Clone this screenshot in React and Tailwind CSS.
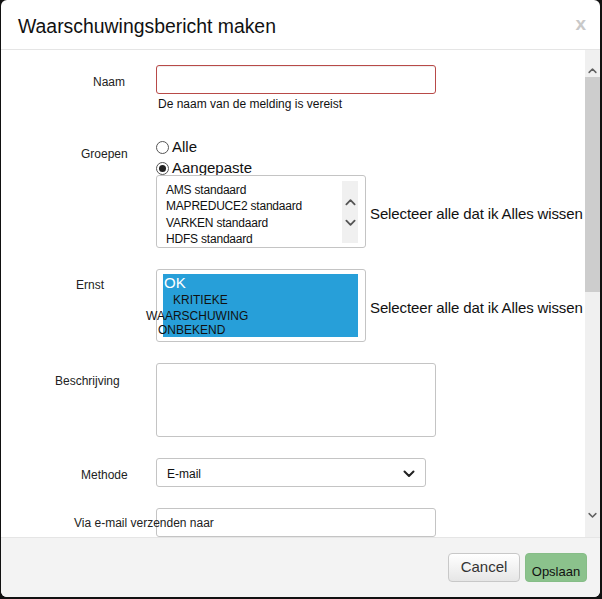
import React from "react";

const font = "font-['Liberation_Sans',Arial,sans-serif]";

function Chevron({ dir = "down", className = "" }) {
  return (
    <svg viewBox="0 0 12 8" className={className} fill="none" stroke="currentColor" strokeWidth="2" strokeLinecap="round" strokeLinejoin="round">
      {dir === "down" ? <path d="M1.5 1.5 6 6l4.5-4.5" /> : <path d="M1.5 6.5 6 2l4.5 4.5" />}
    </svg>
  );
}

function Radio({ checked, label, h }) {
  return (
    <div className={`flex items-end ${h}`}>
      <div className="flex items-center h-[19px]">
        <span className="w-[13px] h-[13px] rounded-full border border-[#555] bg-white flex items-center justify-center">
          {checked && <span className="w-[7px] h-[7px] rounded-full bg-[#222]" />}
        </span>
        <span className="ml-[3px] text-[15px] text-[#111]">{label}</span>
      </div>
    </div>
  );
}

function Row({ label, labelPad, labelTop, children, className = "" }) {
  return (
    <div className={`flex ${className}`}>
      <div className="w-[155px] shrink-0 relative">
        <div
          className="absolute whitespace-nowrap text-[12px] leading-4 text-[#222]"
          style={{ left: labelPad, top: labelTop }}
        >
          {label}
        </div>
      </div>
      <div className="flex-1">{children}</div>
    </div>
  );
}

function SelectAll() {
  return (
    <span className="ml-[4px] mt-[5px] text-[15px] tracking-[-0.12px] text-[#111] whitespace-nowrap">
      Selecteer alle dat ik Alles wissen
    </span>
  );
}

export default function App() {
  const groups = ["AMS standaard", "MAPREDUCE2 standaard", "VARKEN standaard", "HDFS standaard"];

  return (
    <div className={`w-[602px] h-[599px] bg-[#111] ${font}`}>
      <div className="ml-[1px] w-[599px] h-[597px] bg-white rounded-[6px] overflow-hidden flex flex-col">
        {/* Header */}
        <div className="h-[50px] shrink-0 border-b border-[#e5e5e5] flex items-center justify-between pl-[17px] pr-[14px]">
          <h1 className="text-[19.4px] text-[#111] pt-[4px]">Waarschuwingsbericht maken</h1>
          <span className="text-[19px] font-bold text-[#c9c9c9] leading-none -mt-[3px]">x</span>
        </div>

        {/* Body */}
        <div className="h-[487px] shrink-0 flex">
          <div className="flex-1 overflow-hidden pt-[15px]">
            <Row label="Naam" labelPad={92} labelTop={9}>
              <div className="w-[280px] h-[29px] rounded-[3px] border border-[#b84a48] shadow-[inset_0_1px_1px_rgba(0,0,0,0.075)]" />
              <div className="mt-[2px] ml-[2px] text-[12px] leading-4 text-[#111]">De naam van de melding is vereist</div>
            </Row>

            <Row label="Groepen" labelPad={80} labelTop={9} className="mt-[25px]">
              <Radio label="Alle" h="h-[20px]" />
              <Radio checked label="Aangepaste" h="h-[21px]" />
              <div className="flex items-center -mt-[3px]">
                <div className="w-[210px] h-[73px] rounded-[3px] border border-[#c4c4c4] flex pl-[9px] pr-[7px] pt-[5px] pb-[4px]">
                  <div className="flex-1 pt-[1px] text-[12px] leading-[16.4px] text-[#111] tracking-[-0.2px]">
                    {groups.map((g) => (
                      <div key={g}>{g}</div>
                    ))}
                  </div>
                  <div className="w-[16px] bg-[#f0f0f0] flex flex-col items-center justify-center gap-[13px] text-[#555]">
                    <Chevron dir="up" className="w-[11px] h-[8px]" />
                    <Chevron dir="down" className="w-[11px] h-[8px]" />
                  </div>
                </div>
                <SelectAll />
              </div>
            </Row>

            <Row label="Ernst" labelPad={75} labelTop={8} className="mt-[21px]">
              <div className="flex items-center">
                <div className="w-[210px] h-[73px] rounded-[3px] border border-[#c4c4c4] pl-[6px] pr-[7px] py-[4px]">
                  <div className="h-[63px] bg-[#279fd9] text-[12px] leading-4 text-[#111]">
                    <div className="text-[15px] leading-[17px] text-white pl-[1px]">OK</div>
                    <div className="mt-[1px] pl-[10px]">KRITIEKE</div>
                    <div className="-ml-[17px] whitespace-nowrap">WAARSCHUWING</div>
                    <div className="-ml-[5px] leading-[13px]">ONBEKEND</div>
                  </div>
                </div>
                <SelectAll />
              </div>
            </Row>

            <Row label="Beschrijving" labelPad={54} labelTop={10} className="mt-[21px]">
              <div className="w-[280px] h-[74px] rounded-[3px] border border-[#c4c4c4]" />
            </Row>

            <Row label="Methode" labelPad={80} labelTop={9} className="mt-[21px]">
              <div className="w-[270px] h-[29px] rounded-[3px] border border-[#c4c4c4] flex items-center justify-between pl-[10px] pr-[10px] pt-[2px]">
                <span className="text-[12px] text-[#111]">E-mail</span>
                <Chevron className="w-[12px] h-[8px] text-[#222]" />
              </div>
            </Row>

            <Row label="Via e-mail verzenden naar" labelPad={73} labelTop={7} className="mt-[21px]">
              <div className="w-[280px] h-[29px] rounded-[3px] border border-[#c4c4c4]" />
            </Row>
          </div>

          {/* Scrollbar */}
          <div className="w-[15px] shrink-0 bg-[#f0f0f0] flex flex-col items-center">
            <Chevron dir="up" className="mt-[17px] w-[9px] h-[7px] text-[#606060]" />
            <div className="mt-[3px] w-[15px] h-[215px] bg-[#cdcdcd]" />
            <div className="flex-1" />
            <Chevron className="mb-[18px] w-[9px] h-[7px] text-[#606060]" />
          </div>
        </div>

        {/* Footer */}
        <div className="flex-1 border-t border-[#e5e5e5] bg-[#f3f3f3] flex justify-end items-start pt-[15px] pr-[13px] gap-[5px]">
          <button className="w-[72px] h-[29px] rounded-[4px] border border-[#c8c8c8] bg-gradient-to-b from-white to-[#e6e6e6] text-[15px] text-[#333]">
            Cancel
          </button>
          <button className="w-[62px] h-[29px] rounded-[4px] border border-[#86bd87] bg-[#8bc28c] text-[13px] text-[#111] pt-[8px]">
            Opslaan
          </button>
        </div>
      </div>
    </div>
  );
}
